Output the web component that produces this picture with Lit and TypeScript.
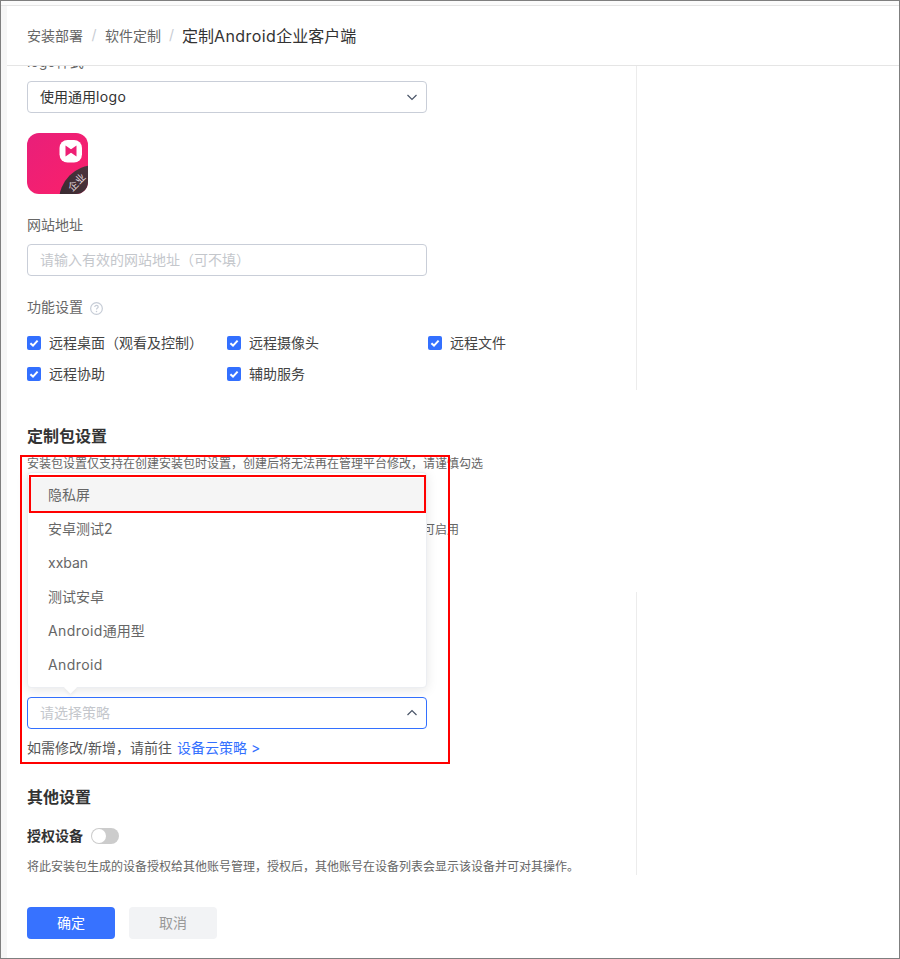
import { LitElement, html, css, svg } from "lit";
import { customElement } from "lit/decorators.js";

const chevron = (up: boolean) => html`<svg class="chev" width="12" height="12" viewBox="0 0 12 12" fill="none">
  <path d=${up ? "M1.5 8 L6 3.5 L10.5 8" : "M1.5 4 L6 8.5 L10.5 4"} stroke="#4a5568" stroke-width="1.2"/>
</svg>`;

const check = html`<span class="cb"><svg width="14" height="14" viewBox="0 0 14 14" fill="none">
  <path d="M3.4 7.2 L6 9.6 L10.6 4.6" stroke="#fff" stroke-width="2"/>
</svg></span>`;

const logo = svg`<svg class="logo" width="61" height="61" viewBox="0 0 61 61">
  <defs>
    <linearGradient id="lg" x1="0" y1="0" x2="1" y2="1">
      <stop offset="0" stop-color="#e81f7a"/><stop offset="1" stop-color="#fb206a"/>
    </linearGradient>
    <linearGradient id="dk" x1="0" y1="1" x2="1" y2="0">
      <stop offset="0" stop-color="#2b2226"/><stop offset="1" stop-color="#5c3d48"/>
    </linearGradient>
    <clipPath id="rr"><rect width="61" height="61" rx="12"/></clipPath>
  </defs>
  <g clip-path="url(#rr)">
    <rect width="61" height="61" fill="url(#lg)"/>
    <circle cx="68" cy="68" r="36" fill="url(#dk)"/>
    <text x="49.5" y="53" transform="rotate(-45 49.5 49)" text-anchor="middle" font-size="10" fill="#e6dfe2" font-family="'Noto Sans CJK SC',sans-serif">企业</text>
  </g>
  <rect x="32.5" y="7" width="22.5" height="22.5" rx="8" fill="#fff"/>
  <path d="M38.5 12.5 L46.5 18 L38.5 23.5 Z" fill="#ee1f74"/>
  <path d="M49.5 12.5 L49.5 23.5 L41.5 18 Z" fill="#ee1f74"/>
</svg>`;

const help = html`<svg class="help" width="13" height="13" viewBox="0 0 12 12" fill="none">
  <circle cx="6" cy="6" r="5.4" stroke="#c6ccd6" stroke-width="1.1"/>
  <path d="M4.4 4.7 C4.4 3.7 5.1 3.2 6 3.2 C6.9 3.2 7.6 3.8 7.6 4.6 C7.6 5.6 6 5.7 6 7" stroke="#c6ccd6" stroke-width="1.1"/>
  <circle cx="6" cy="8.7" r="0.7" fill="#c6ccd6"/>
</svg>`;

@customElement("app-root")
export class AppRoot extends LitElement {
  static styles = css`
    :host {
      display: block;
      font-family: Inter, "Noto Sans CJK SC", sans-serif;
      font-size: 14px;
      color: #333;
    }
    * { box-sizing: border-box; }
    .frame {
      position: relative;
      height: 959px;
      border: 1px solid #7f7f7f;
      background: #fff;
      display: flex;
      flex-direction: column;
      overflow: hidden;
    }
    .topstrip { height: 5px; background: #fbfbfb; border-bottom: 1px solid #e5e5e5; flex: none; }
    .body { flex: 1; display: flex; min-height: 0; }
    .side { width: 6px; background: #f6f6f6; flex: none; }
    .main { flex: 1; display: flex; flex-direction: column; min-width: 0; }
    .head {
      height: 60px;
      flex: none;
      border-bottom: 1px solid #e5e5e5;
      padding: 0 0 2px 20px;
      display: flex;
      align-items: center;
      color: #666;
      background: #fff;
      position: relative;
      z-index: 1;
    }
    .sep { width: 22px; text-align: center; color: #c8ccd3; }
    .sep.b { width: 21px; }
    .cur { font-size: 16px; color: #333; }
    .lat { letter-spacing: 0.4px; }
    .scroll { flex: 1; min-height: 0; overflow: hidden; }
    .sec {
      width: 630px;
      padding-left: 20px;
      display: flex;
      flex-direction: column;
      align-items: flex-start;
    }
    .line { border-right: 1px solid #ececec; }
    .s1 { height: 324px; }
    .s2 { height: 202px; padding-top: 34px; }
    .s3 { height: 283px; padding-top: 105px; }
    .label { line-height: 20px; padding-bottom: 2px; color: #666; margin-bottom: 7px; display: flex; align-items: center; gap: 7px; }
    .first { margin-top: -14px; }
    .ctl {
      width: 400px;
      height: 32px;
      border: 1px solid #c9ced8;
      border-radius: 4px;
      padding: 0 12px;
      display: flex;
      align-items: center;
      justify-content: space-between;
      background: #fff;
      font: inherit;
      color: #333;
      flex: none;
    }
    .ctl > span { margin-bottom: 2px; }
    input.ctl { outline: none; padding-bottom: 2px; }
    input.ctl::placeholder, .ph { color: #c4c7cc; }
    .ctl.open { border-color: #3370ff; }
    .chev { margin-right: -4px; }
    .logo { display: block; margin: 20px 0 21px; flex: none; }
    .mt21 { margin-top: 21px; }
    .help { margin-top: 2px; }
    .checks {
      display: grid;
      grid-template-columns: 200px 201px 200px;
      grid-auto-rows: 31px;
      margin-top: 1px;
    }
    .chk { display: flex; align-items: center; gap: 8px; white-space: nowrap; color: #444; }
    .chk > span:last-child { margin-bottom: 2px; }
    .cb { width: 14px; height: 14px; border-radius: 2px; background: #3370ff; display: block; flex: none; }
    .cb svg { display: block; }
    h3 { margin: 0; font-size: 16px; line-height: 24px; font-weight: 600; color: #333; }
    .desc { font-size: 12px; line-height: 18px; color: #666; }
    .d1 { margin-top: 7px; }
    .d2 { margin-top: 48px; }
    .wrap { position: relative; flex: none; }
    .hint { line-height: 22px; margin-top: 8px; color: #555; }
    .hint a { color: #3370ff; text-decoration: none; margin-left: 1px; }
    .mt26 { margin-top: 26px; }
    .auth { margin-top: 16px; line-height: 22px; font-weight: 600; display: flex; align-items: center; gap: 8px; }
    .toggle { width: 28px; height: 16px; border-radius: 8px; background: #ccc; padding: 1px; display: block; }
    .knob { width: 14px; height: 14px; border-radius: 50%; background: #fff; display: block; }
    .d3 { margin-top: 11px; }
    .foot { flex: none; padding: 32px 0 19px 20px; display: flex; gap: 14px; }
    .btn {
      width: 88px;
      height: 32px;
      border-radius: 4px;
      padding-bottom: 2px;
      display: flex;
      align-items: center;
      justify-content: center;
    }
    .pri { background: #3772ff; color: #fff; }
    .sec-btn { background: #f2f3f5; color: #999; }
    .pop {
      position: absolute;
      left: 0;
      right: 0;
      bottom: calc(100% + 9px);
      background: #fff;
      border-radius: 4px;
      border: 1px solid #eceef2;
      box-shadow: 0 2px 12px rgba(0, 0, 0, 0.1);
      padding: 5px 0;
      z-index: 2;
    }
    .pop::after {
      content: "";
      position: absolute;
      left: 38px;
      bottom: -5px;
      width: 9px;
      height: 9px;
      background: #fff;
      transform: rotate(45deg);
      box-shadow: 2px 2px 3px rgba(0, 0, 0, 0.04);
    }
    .opt { height: 34px; line-height: 34px; padding: 0 20px; color: #666; }
    .opt.hov { background: #f5f5f5; }
    .red { position: absolute; border: 2px solid #ff0000; z-index: 3; pointer-events: none; }
    .r1 { left: 19px; top: 454px; width: 430px; height: 309px; }
    .r2 { left: 28px; top: 474px; width: 397px; height: 38px; }
  `;

  render() {
    const opts = [
      html`隐私屏`,
      html`安卓测试2`,
      html`xxban`,
      html`测试安卓`,
      html`<span class="lat">Android</span>通用型`,
      html`<span class="lat">Android</span>`,
    ];
    const feats = ["远程桌面（观看及控制）", "远程摄像头", "远程文件", "远程协助", "辅助服务"];
    return html`<div class="frame">
      <div class="topstrip"></div>
      <div class="body">
        <div class="side"></div>
        <div class="main">
          <div class="head">
            <span>安装部署</span><span class="sep">/</span><span>软件定制</span><span class="sep b">/</span>
            <span class="cur">定制<span class="lat">Android</span>企业客户端</span>
          </div>
          <div class="scroll">
            <div class="sec s1 line">
              <div class="label first">logo样式</div>
              <div class="ctl"><span>使用通用<span class="lat">logo</span></span>${chevron(false)}</div>
              ${logo}
              <div class="label">网站地址</div>
              <input class="ctl" placeholder="请输入有效的网站地址（可不填）" />
              <div class="label mt21">功能设置 ${help}</div>
              <div class="checks">
                ${feats.map((f) => html`<div class="chk">${check}<span>${f}</span></div>`)}
              </div>
            </div>
            <div class="sec s2">
              <h3>定制包设置</h3>
              <div class="desc d1">安装包设置仅支持在创建安装包时设置，创建后将无法再在管理平台修改，请谨慎勾选</div>
              <div class="desc d2">开启隐私屏后，被控设备在远程控制时可显示隐私屏画面，需设备支持后方可启用</div>
            </div>
            <div class="sec s3 line">
              <div class="wrap">
                <div class="pop">
                  ${opts.map((o, i) => html`<div class="opt ${i === 0 ? "hov" : ""}">${o}</div>`)}
                </div>
                <div class="ctl open"><span class="ph">请选择策略</span>${chevron(true)}</div>
              </div>
              <div class="hint">如需修改/新增，请前往 <a href="#">设备云策略 &gt;</a></div>
              <h3 class="mt26">其他设置</h3>
              <div class="auth">授权设备 <span class="toggle"><span class="knob"></span></span></div>
              <div class="desc d3">将此安装包生成的设备授权给其他账号管理，授权后，其他账号在设备列表会显示该设备并可对其操作。</div>
            </div>
          </div>
          <div class="foot">
            <div class="btn pri">确定</div>
            <div class="btn sec-btn">取消</div>
          </div>
        </div>
      </div>
      <div class="red r1"></div>
      <div class="red r2"></div>
    </div>`;
  }
}
